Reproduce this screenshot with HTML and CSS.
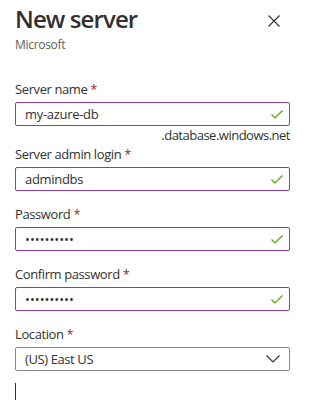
FILE: index.html
```html
<!DOCTYPE html>
<html lang="en">
<head>
    <meta charset="UTF-8">
    <meta name="viewport" content="width=device-width, initial-scale=1.0">
    <title>New server</title>
    <link rel="stylesheet" href="styles.css">
</head>
<body>

    <div class="panel">
        <header class="panel-header">
            <div>
                <h1>New server</h1>
                <div class="publisher">Microsoft</div>
            </div>
            <button class="close" aria-label="Close">
                <svg width="12" height="12" viewBox="0 0 12 12">
                    <path d="M0.5 0.5 L11.5 11.5 M11.5 0.5 L0.5 11.5" stroke="#323130" stroke-width="1.1" fill="none"/>
                </svg>
            </button>
        </header>

        <form class="form">
            <div class="field with-suffix">
                <label>Server name <span class="req">*</span></label>
                <div class="box valid">
                    <input type="text" value="my-azure-db" readonly>
                    <svg class="check" width="12" height="9" viewBox="0 0 12 9">
                        <path d="M0.5 4.5 L4 8 L11.5 0.5" stroke="#57a300" stroke-width="1.2" fill="none"/>
                    </svg>
                </div>
                <div class="suffix">.database.windows.net</div>
            </div>

            <div class="field">
                <label>Server admin login <span class="req">*</span></label>
                <div class="box valid">
                    <input type="text" value="admindbs" readonly>
                    <svg class="check" width="12" height="9" viewBox="0 0 12 9">
                        <path d="M0.5 4.5 L4 8 L11.5 0.5" stroke="#57a300" stroke-width="1.2" fill="none"/>
                    </svg>
                </div>
            </div>

            <div class="field">
                <label>Password <span class="req">*</span></label>
                <div class="box valid">
                    <input type="password" value="Pa55word!!" readonly>
                    <svg class="check" width="12" height="9" viewBox="0 0 12 9">
                        <path d="M0.5 4.5 L4 8 L11.5 0.5" stroke="#57a300" stroke-width="1.2" fill="none"/>
                    </svg>
                </div>
            </div>

            <div class="field">
                <label>Confirm password <span class="req">*</span></label>
                <div class="box valid">
                    <input type="password" value="Pa55word!!" readonly>
                    <svg class="check" width="12" height="9" viewBox="0 0 12 9">
                        <path d="M0.5 4.5 L4 8 L11.5 0.5" stroke="#57a300" stroke-width="1.2" fill="none"/>
                    </svg>
                </div>
            </div>

            <div class="field last">
                <label>Location <span class="req">*</span></label>
                <div class="box select">
                    <span class="value">(US) East US</span>
                    <svg class="chevron" width="14" height="8" viewBox="0 0 14 8">
                        <path d="M0.5 0.5 L7 7 L13.5 0.5" stroke="#323130" stroke-width="1.1" fill="none"/>
                    </svg>
                </div>
            </div>

            <div class="caret"></div>
        </form>
    </div>

</body>
</html>
```

FILE: styles.css
```css
body {
    margin: 0;
    padding: 0;
    background: #fff;
    font-family: "Open Sans", "Noto Sans", sans-serif;
    color: #323130;
}
.panel {
    width: 275px;
    padding: 3px 0 0 15px;
}
.panel-header {
    display: flex;
    justify-content: space-between;
    align-items: flex-start;
}
h1 {
    margin: 0;
    font-size: 24px;
    font-weight: 600;
    line-height: 32px;
    letter-spacing: -0.9px;
}
.publisher {
    margin-top: 3px;
    font-size: 12px;
    line-height: 14px;
    letter-spacing: -0.3px;
    color: #605e5c;
}
.close {
    background: none;
    border: none;
    padding: 0;
    margin: 12px 10px 0 0;
    width: 12px;
    height: 12px;
    display: flex;
}
.form {
    margin-top: 27px;
}
.field {
    margin-bottom: 13px;
}
.field.with-suffix {
    margin-bottom: 0;
}
.field.last {
    margin-bottom: 12px;
}
label {
    display: block;
    font-size: 13px;
    line-height: 20px;
    letter-spacing: -0.4px;
    margin-bottom: 3px;
}
.req {
    color: #a4262c;
}
.box {
    height: 22px;
    border: 1px solid #8a8886;
    border-radius: 2px;
    display: flex;
    align-items: center;
    padding: 0 6px 0 9px;
}
.box.valid {
    border-color: #8a3ca6;
}
.box input {
    flex: 1;
    min-width: 0;
    border: none;
    outline: none;
    padding: 0;
    background: none;
    font-family: inherit;
    font-size: 13px;
    letter-spacing: -0.3px;
    color: #323130;
}
.box input[type="password"] {
    letter-spacing: 0;
}
.box .value {
    flex: 1;
    font-size: 13px;
    letter-spacing: -0.4px;
}
.chevron {
    margin-right: 3px;
}
.suffix {
    text-align: right;
    font-size: 13px;
    line-height: 18px;
    letter-spacing: -0.5px;
}
.caret {
    width: 1px;
    height: 17px;
    background: #323130;
}
```
